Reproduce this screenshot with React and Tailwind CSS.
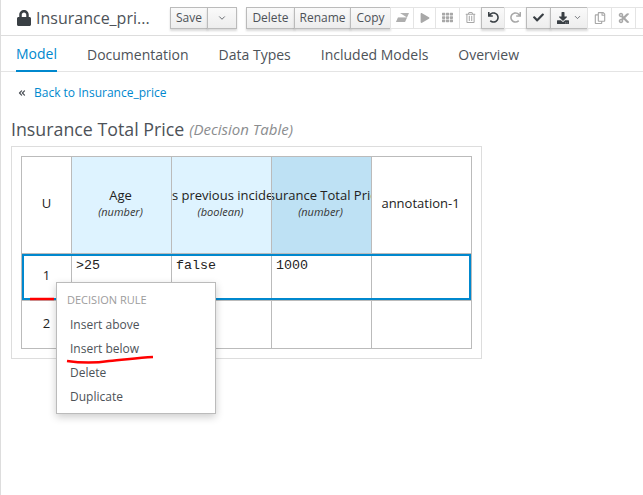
import { ChevronDown, ChevronsLeft } from "lucide-react";
import { FaLock, FaPlay, FaTh, FaRegTrashAlt, FaUndo, FaRedo, FaCheck, FaDownload, FaRegCopy, FaCut } from "react-icons/fa";

const tabs = ["Model", "Documentation", "Data Types", "Included Models", "Overview"];
const menuItems = ["Insert above", "Insert below", "Delete", "Duplicate"];

function Btn({ children, className = "", on = true }) {
  return (
    <div
      className={`h-[22px] shrink-0 flex items-center justify-center border -ml-px text-[12px] ${
        on
          ? "border-[#bbb] text-[#4d5258] bg-gradient-to-b from-[#fafafa] to-[#ededed] shadow-[0_2px_2px_rgba(0,0,0,0.15)]"
          : "border-[#e4e4e4] text-[#a8a8a8] bg-white"
      } ${className}`}
    >
      {children}
    </div>
  );
}

function HeadCell({ title, type, className = "" }) {
  return (
    <div className={`w-[100px] h-[96px] pb-[6px] pr-[2px] border-r border-[#bbb] flex flex-col items-center justify-center overflow-hidden ${className}`}>
      <span className="text-[13px] leading-[18px] whitespace-nowrap text-[#222]">{title}</span>
      <span className="text-[11px] leading-[15px] italic text-[#333]">{type}</span>
    </div>
  );
}

export default function App() {
  return (
    <div className="relative w-[643px] h-[495px] overflow-hidden bg-white border-l border-[#ddd] font-['Open_Sans',sans-serif] text-[#363636]">
      {/* barra superior */}
      <div className="h-[36px] flex items-center border-b border-[#ddd] pl-[15px] overflow-hidden">
        <FaLock size={16} className="text-[#393f44] shrink-0" />
        <span className="ml-[4px] w-[134px] shrink-0 text-[16px] text-[#4d5258] whitespace-nowrap">Insurance_pri...</span>
        <div className="flex shrink-0">
          <Btn className="w-[38px] ml-0">Save</Btn>
          <Btn className="w-[30px]"><ChevronDown size={10} /></Btn>
        </div>
        <div className="flex shrink-0 ml-[9px]">
          <Btn className="w-[49px] ml-0">Delete</Btn>
          <Btn className="w-[57px]">Rename</Btn>
          <Btn className="w-[41px]">Copy</Btn>
          <Btn on={false} className="w-[24px]">
            <svg width="13" height="9" viewBox="0 0 13 9" fill="currentColor">
              <path d="M4 0H13L11 4.5H2L0 9H9L11 4.5" fillOpacity="0.9" />
              <path d="M2 4.5H11L9 9H0Z" fillOpacity="0.35" />
            </svg>
          </Btn>
          <Btn on={false} className="w-[23px]"><FaPlay size={10} /></Btn>
          <Btn on={false} className="w-[25px]"><FaTh size={11} /></Btn>
          <Btn on={false} className="w-[23px]"><FaRegTrashAlt size={11} /></Btn>
          <Btn className="w-[24px]"><FaUndo size={11} className="text-[#393f44]" /></Btn>
          <Btn on={false} className="w-[23px]"><FaRedo size={11} /></Btn>
          <Btn className="w-[25px]"><FaCheck size={11} className="text-[#393f44]" /></Btn>
          <Btn className="w-[38px] gap-[4px]"><FaDownload size={12} className="text-[#393f44]" /><ChevronDown size={9} /></Btn>
          <Btn on={false} className="w-[25px]"><FaRegCopy size={12} /></Btn>
          <Btn on={false} className="w-[25px]"><FaCut size={12} /></Btn>
          <Btn on={false} className="w-[25px]" />
        </div>
      </div>

      {/* pestañas */}
      <div className="h-[36px] flex items-stretch gap-[30px] border-b border-[#e4e4e4] pl-[15px]">
        {tabs.map((t, i) => (
          <div
            key={t}
            className={`flex items-center text-[14px] -mb-px ${i === 0 ? "text-[#0088ce] border-b-2 border-[#0088ce]" : "text-[#4d5258]"}`}
          >
            {t}
          </div>
        ))}
      </div>

      <div className="flex items-center h-[41px] pl-[16px] text-[12px] text-[#0088ce]">
        <ChevronsLeft size={10} strokeWidth={3} className="text-[#4d5258] mr-[7px]" />
        Back to Insurance_price
      </div>

      <div className="pl-[10px] h-[33px] flex items-center text-[#4d5258] text-[17.8px]">
        Insurance Total Price
        <span className="ml-[5px] text-[15px] italic text-[#8b8d8f]">(Decision Table)</span>
      </div>

      {/* tabla */}
      <div className="ml-[10px] w-[471px] h-[213px] border border-[#ddd] p-[9px]">
        <div className="w-[451px] border border-[#bbb] text-[#222]">
          <div className="flex border-b border-[#bbb]">
            <div className="w-[50px] h-[96px] pb-[2px] border-r border-[#bbb] flex items-center justify-center text-[13px]">U</div>
            <HeadCell title="Age" type="(number)" className="bg-[#def3ff]" />
            <HeadCell title="Has previous incident" type="(boolean)" className="bg-[#def3ff]" />
            <HeadCell title="Insurance Total Price" type="(number)" className="bg-[#bee1f4]" />
            <div className="w-[99px] h-[96px] pb-[2px] pr-[2px] flex items-center justify-center text-[13px]">annotation-1</div>
          </div>
          <div className="relative flex h-[47px] border-b border-[#bbb] font-['Liberation_Mono',monospace] text-[13.33px]">
            <div className="w-[50px] pb-[2px] border-r border-[#bbb] flex items-center justify-center text-[13px] font-['Open_Sans',sans-serif]">1</div>
            <div className="w-[100px] border-r border-[#bbb] pl-[4px] pt-[2px]">&gt;25</div>
            <div className="w-[100px] border-r border-[#bbb] pl-[4px] pt-[2px]">false</div>
            <div className="w-[100px] border-r border-[#bbb] pl-[4px] pt-[2px]">1000</div>
            <div className="w-[99px]" />
            <div className="absolute inset-0 border-2 border-[#0088ce] pointer-events-none" />
          </div>
          <div className="flex h-[47px]">
            <div className="w-[50px] pb-[2px] border-r border-[#bbb] flex items-center justify-center text-[13px]">2</div>
            <div className="w-[100px] border-r border-[#bbb]" />
            <div className="w-[100px] border-r border-[#bbb]" />
            <div className="w-[100px] border-r border-[#bbb]" />
            <div className="w-[99px]" />
          </div>
        </div>
      </div>

      {/* menú contextual */}
      <div className="absolute left-[55px] top-[282px] w-[160px] h-[132px] bg-white border border-[#bbb] shadow-[0_3px_8px_rgba(0,0,0,0.2)] pl-[10px] pt-[8px] text-[#4d5258]">
        <div className="text-[11px] leading-[18px] text-[#9c9c9c] uppercase">Decision Rule</div>
        <div className="mt-[4px] pl-[3px]">
          {menuItems.map((m) => (
            <div key={m} className="h-[24px] flex items-center text-[12px]">{m}</div>
          ))}
        </div>
      </div>

      {/* anotaciones en rojo */}
      <svg className="absolute left-0 top-0 pointer-events-none" width="643" height="495" fill="none" stroke="#f00" strokeWidth="2.5">
        <path d="M29 299H53" />
        <path d="M66 361C80 363 95 363 108 361C122 360 135 358 152 357" />
      </svg>
    </div>
  );
}
